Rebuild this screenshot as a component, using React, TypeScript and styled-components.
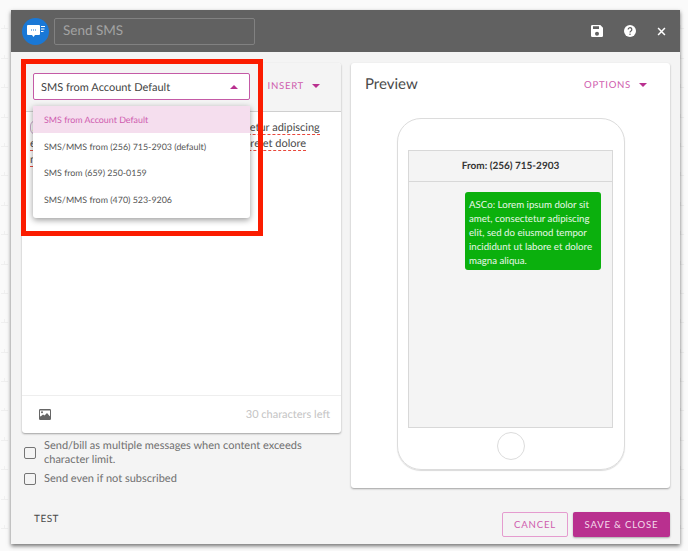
import styled, { createGlobalStyle } from "styled-components";

const plusTile = encodeURIComponent(
  `<svg xmlns="http://www.w3.org/2000/svg" width="29.4" height="29.4"><path d="M4.500 25.500v7M1 29h7" stroke="#efefef" stroke-width="1"/></svg>`
);

const GlobalStyle = createGlobalStyle`
  html, body {
    margin: 0;
    padding: 0;
    height: 100%;
  }
  body {
    background-color: #fafafa;
    font-family: "Lato", "Noto Sans", sans-serif;
    text-rendering: geometricPrecision;
    overflow: hidden;
  }
`;

const PINK = "#b9308f";

const Page = styled.div`
  width: 688px;
  height: 551px;
  padding: 10px 8px 7px 11px;
  box-sizing: border-box;
  position: relative;
  background-image: url("data:image/svg+xml,${plusTile}");
`;

const Dialog = styled.div`
  width: 669px;
  height: 534px;
  display: flex;
  flex-direction: column;
  background: #f4f4f4;
  box-shadow: 0 2px 4px rgba(0, 0, 0, 0.55);
`;

const Header = styled.header`
  height: 42px;
  flex: none;
  background: #616161;
  display: flex;
  align-items: center;
  padding: 0 14px 0 11px;
`;

const Badge = styled.div`
  width: 27px;
  height: 27px;
  border-radius: 50%;
  background: #1a78d6;
  display: flex;
  align-items: center;
  justify-content: center;
  margin-right: 5px;
`;

const TitleInput = styled.div`
  width: 201px;
  height: 27px;
  box-sizing: border-box;
  border: 1px solid #818181;
  border-radius: 2px;
  display: flex;
  align-items: center;
  padding: 0 0 2px 8px;
  color: #a3a3a3;
  font-size: 13.500px;
`;

const HeaderIcons = styled.div`
  margin-left: auto;
  display: flex;
  align-items: center;
  gap: 21px;
`;

const Body = styled.div`
  flex: 1;
  display: flex;
  gap: 10px;
  padding: 11px 10px 0 11px;
`;

const LeftColumn = styled.div`
  width: 319px;
  display: flex;
  flex-direction: column;
`;

const Card = styled.section`
  background: #fff;
  border-radius: 3px;
  box-shadow: 0 1px 2px rgba(0, 0, 0, 0.35);
`;

const EditorCard = styled(Card)`
  height: 370px;
  display: flex;
  flex-direction: column;
`;

const EditorBar = styled.div`
  height: 49px;
  flex: none;
  background: #f4f4f4;
  border-bottom: 1px solid #cfcfcf;
  border-radius: 3px 3px 0 0;
  display: flex;
  align-items: center;
  justify-content: flex-end;
  padding: 0 21px 4px 0;
  box-sizing: border-box;
`;

const TextAction = styled.span`
  display: inline-flex;
  align-items: center;
  gap: 8px;
  margin-top: 2px;
  color: #cf5cae;
  font-size: 9.600px;
  letter-spacing: 0.7px;
`;

const Caret = styled.span<{ $up?: boolean }>`
  width: 0;
  height: 0;
  border-left: 4px solid transparent;
  border-right: 4px solid transparent;
  ${({ $up }) =>
    $up
      ? `border-bottom: 4px solid ${PINK};`
      : `border-top: 4px solid ${PINK};`}
`;

const EditorText = styled.div`
  flex: 1;
  padding: 8px 8px;
  color: #4a4a4a;
  font-size: 11px;
  line-height: 16px;
  white-space: nowrap;
  overflow: hidden;
`;

const Chip = styled.span`
  border: 1px solid #c9a6c9;
  border-radius: 6px;
  padding: 0 10px 0 2px;
`;

const Squiggle = styled.span`
  border-bottom: 1px dashed #e8483c;
`;

const EditorFooter = styled.div`
  height: 37px;
  flex: none;
  border-top: 1px solid #eeeeee;
  display: flex;
  align-items: center;
  justify-content: space-between;
  padding: 0 11px 0 17px;
  color: #c4c4c4;
  font-size: 11px;
`;

const CheckRow = styled.label`
  display: flex;
  align-items: center;
  gap: 8px;
  padding-left: 2px;
  color: #707070;
  font-size: 11px;
  line-height: 14px;
  margin-top: 6px;

  & + & {
    margin-top: 5px;
  }
`;

const Box = styled.span`
  width: 10px;
  height: 10px;
  flex: none;
  border: 1px solid #757575;
  border-radius: 2px;
`;

const TestButton = styled.div`
  margin: 27px 0 0 12px;
  color: #4a4a4a;
  font-size: 10px;
  letter-spacing: 0.5px;
`;

const RightColumn = styled.div`
  width: 319px;
  display: flex;
  flex-direction: column;
`;

const PreviewCard = styled(Card)`
  height: 425px;
  padding: 12px 0 0;
  box-sizing: border-box;
  display: flex;
  flex-direction: column;
  align-items: center;
`;

const PreviewHead = styled.div`
  align-self: stretch;
  display: flex;
  justify-content: space-between;
  align-items: center;
  padding: 0 23px 0 14px;
`;

const PreviewTitle = styled.h2`
  margin: 0;
  font-weight: 400;
  font-size: 15px;
  color: #4a4a4a;
`;

const Phone = styled.div`
  width: 228px;
  height: 352px;
  margin-top: 25px;
  border: 1px solid #dcdcdc;
  border-radius: 24px;
  box-shadow: 0 1px 1px rgba(0, 0, 0, 0.15);
  display: flex;
  flex-direction: column;
  align-items: center;
  padding-top: 31px;
  box-sizing: border-box;
`;

const Screen = styled.div`
  width: 205px;
  height: 278px;
  flex: none;
  background: #f4f4f4;
  border: 1px solid #d8d8d8;
  box-sizing: border-box;
`;

const ScreenHead = styled.div`
  height: 31px;
  border-bottom: 1px solid #d8d8d8;
  display: flex;
  align-items: center;
  justify-content: center;
  box-sizing: border-box;
  font-size: 10px;
  font-weight: 700;
  color: #333;
`;

const Bubble = styled.div`
  width: 136px;
  height: 78px;
  margin: 10px 0 0 56px;
  padding: 6px 4px;
  box-sizing: border-box;
  background: #0bb00d;
  border-radius: 3px;
  color: #e8f7e8;
  font-size: 9.700px;
  line-height: 14px;
  white-space: nowrap;
`;

const HomeButton = styled.div`
  width: 26px;
  height: 26px;
  margin-top: 4px;
  border: 1px solid #dcdcdc;
  border-radius: 50%;
`;

const Actions = styled.div`
  margin-top: 24px;
  display: flex;
  justify-content: flex-end;
  gap: 5px;
`;

const Cancel = styled.button`
  width: 66px;
  height: 25px;
  padding: 0;
  background: transparent;
  border: 1px solid #e59ccf;
  border-radius: 2px;
  color: #cf5cae;
  font: inherit;
  font-size: 9.600px;
  letter-spacing: 0.8px;
`;

const Save = styled.button`
  width: 97px;
  height: 25px;
  padding: 0;
  background: ${PINK};
  border: 0;
  border-radius: 2px;
  box-shadow: 0 1px 2px rgba(0, 0, 0, 0.3);
  color: #f4dcec;
  font: inherit;
  font-size: 9.600px;
  letter-spacing: 0.8px;
`;

const SelectTrigger = styled.div`
  position: absolute;
  left: 33px;
  top: 73px;
  width: 217px;
  height: 27px;
  box-sizing: border-box;
  background: #fff;
  border: 1px solid #c45aa6;
  border-radius: 2px;
  display: flex;
  align-items: center;
  justify-content: space-between;
  padding: 1px 11px 0 7px;
  color: #444;
  font-size: 11px;
`;

const Menu = styled.ul`
  position: absolute;
  left: 33px;
  top: 106px;
  width: 217px;
  margin: 0;
  padding: 0 0 6px;
  list-style: none;
  background: #fff;
  border-radius: 0 0 3px 3px;
  box-shadow: 0 2px 6px rgba(0, 0, 0, 0.4);
`;

const MenuItem = styled.li<{ $active?: boolean }>`
  height: 26.600px;
  box-sizing: border-box;
  display: flex;
  align-items: center;
  padding: 1px 0 0 11px;
  font-size: 8.900px;
  color: ${({ $active }) => ($active ? "#cf5cae" : "#555")};
  background: ${({ $active }) => ($active ? "#f5deee" : "transparent")};
`;

const Highlight = styled.div`
  position: absolute;
  left: 21px;
  top: 59px;
  width: 242px;
  height: 177px;
  box-sizing: border-box;
  border: 5px solid #fb1c00;
  pointer-events: none;
`;

const SmsIcon = () => (
  <svg width="18" height="13" viewBox="0 0 18 13">
    <path
      d="M1 0h11a1 1 0 0 1 1 1v8a1 1 0 0 1-1 1H8l-1.500 2L5 10H1a1 1 0 0 1-1-1V1a1 1 0 0 1 1-1z"
      fill="#fff"
    />
    <path d="M4 5h5" stroke="#1a78d6" strokeWidth="1" strokeDasharray="1 1" />
    <path d="M14 1.500h4M14 4h3.500M14 6.500h2.500" stroke="#fff" strokeWidth="1.100" />
  </svg>
);

const SaveIcon = () => (
  <svg width="12" height="12" viewBox="0 0 18 18">
    <path
      d="M14 0H2a2 2 0 0 0-2 2v14a2 2 0 0 0 2 2h14a2 2 0 0 0 2-2V4l-4-4zM9 16a3 3 0 1 1 0-6 3 3 0 0 1 0 6zm3-10H3V2h9v4z"
      fill="#fff"
    />
  </svg>
);

const HelpIcon = () => (
  <svg width="12" height="12" viewBox="0 0 20 20">
    <circle cx="10" cy="10" r="10" fill="#fff" />
    <path
      d="M7 7.500a3 3 0 1 1 4.600 2.500c-1 .7-1.600 1.200-1.600 2.500"
      fill="none"
      stroke="#616161"
      strokeWidth="2"
    />
    <circle cx="10" cy="15.500" r="1.300" fill="#616161" />
  </svg>
);

const CloseIcon = () => (
  <svg width="9" height="9" viewBox="0 0 10 10">
    <path d="M1.200 1.200l7.600 7.600M8.800 1.200L1.200 8.800" stroke="#fff" strokeWidth="1.700" />
  </svg>
);

const ImageIcon = () => (
  <svg width="12" height="11" viewBox="0 0 12 11">
    <rect x="0" y="0" width="12" height="11" rx="1.200" fill="#666" />
    <rect x="1" y="1.500" width="10" height="6" fill="#fff" />
    <circle cx="3" cy="3.200" r="1" fill="#666" />
    <path d="M1 8l3-2.500 1.500 1L8 4l3 3.500V8z" fill="#666" />
  </svg>
);

const menuOptions = [
  "SMS from Account Default",
  "SMS/MMS from (256) 715-2903 (default)",
  "SMS from (659) 250-0159",
  "SMS/MMS from (470) 523-9206",
];

export default function App() {
  return (
    <>
      <GlobalStyle />
      <Page>
        <Dialog>
          <Header>
            <Badge>
              <SmsIcon />
            </Badge>
            <TitleInput>Send SMS</TitleInput>
            <HeaderIcons>
              <SaveIcon />
              <HelpIcon />
              <CloseIcon />
            </HeaderIcons>
          </Header>
          <Body>
            <LeftColumn>
              <EditorCard>
                <EditorBar>
                  <TextAction>
                    INSERT <Caret />
                  </TextAction>
                </EditorBar>
                <EditorText>
                  <Chip>ASCo:</Chip> Lorem ipsum dolor sit amet,{" "}
                  <Squiggle>consectetur adipiscing</Squiggle>
                  <br />
                  <Squiggle>elit, sed do eiusmod tempor incididunt ut labore et dolore</Squiggle>
                  <br />
                  <Squiggle>magna</Squiggle> aliqua.
                </EditorText>
                <EditorFooter>
                  <ImageIcon />
                  <span>30 characters left</span>
                </EditorFooter>
              </EditorCard>
              <CheckRow>
                <Box />
                <span>
                  Send/bill as multiple messages when content exceeds
                  <br />
                  character limit.
                </span>
              </CheckRow>
              <CheckRow>
                <Box />
                <span>Send even if not subscribed</span>
              </CheckRow>
              <TestButton>TEST</TestButton>
            </LeftColumn>
            <RightColumn>
              <PreviewCard>
                <PreviewHead>
                  <PreviewTitle>Preview</PreviewTitle>
                  <TextAction>
                    OPTIONS <Caret />
                  </TextAction>
                </PreviewHead>
                <Phone>
                  <Screen>
                    <ScreenHead>From: (256) 715-2903</ScreenHead>
                    <Bubble>
                      ASCo: Lorem ipsum dolor sit
                      <br />
                      amet, consectetur adipiscing
                      <br />
                      elit, sed do eiusmod tempor
                      <br />
                      incididunt ut labore et dolore
                      <br />
                      magna aliqua.
                    </Bubble>
                  </Screen>
                  <HomeButton />
                </Phone>
              </PreviewCard>
              <Actions>
                <Cancel>CANCEL</Cancel>
                <Save>SAVE &amp; CLOSE</Save>
              </Actions>
            </RightColumn>
          </Body>
        </Dialog>
        <SelectTrigger>
          SMS from Account Default
          <Caret $up />
        </SelectTrigger>
        <Menu>
          {menuOptions.map((option, i) => (
            <MenuItem key={option} $active={i === 0}>
              {option}
            </MenuItem>
          ))}
        </Menu>
        <Highlight />
      </Page>
    </>
  );
}
